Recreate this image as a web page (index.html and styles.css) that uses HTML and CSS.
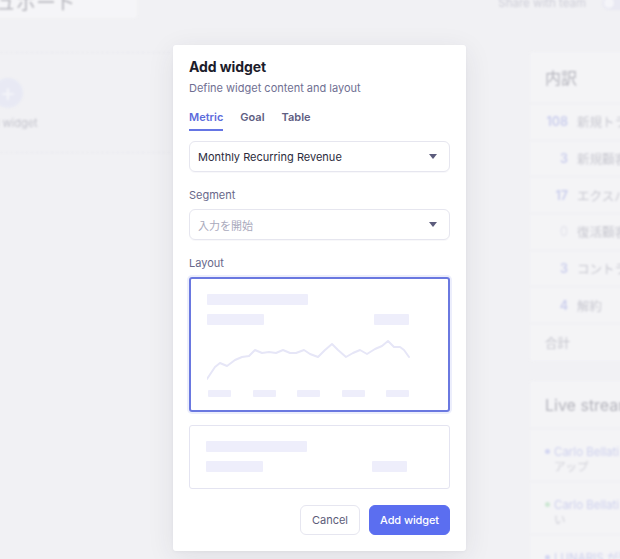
FILE: index.html
```html
<!DOCTYPE html>
<html lang="ja">
<head>
<meta charset="utf-8">
<title>Add widget</title>
<link rel="stylesheet" href="styles.css">
</head>
<body>
<div class="dash">
  <header class="dash-head">
    <div class="title-card">ダッシュボード</div>
    <div class="share">
      <span>Share with team</span>
      <span class="toggle"></span>
    </div>
  </header>
  <div class="dash-body">
    <section class="grid-left">
      <div class="add-slot">
        <span class="add-circle">+</span>
        <span class="add-label">Add widget</span>
      </div>
    </section>
    <aside class="side">
      <div class="panel">
        <div class="panel-head">内訳</div>
        <div class="brow"><span class="num">108</span><span class="lbl">新規トライアル</span></div>
        <div class="brow"><span class="num">3</span><span class="lbl">新規顧客</span></div>
        <div class="brow"><span class="num">17</span><span class="lbl">エクスパンション</span></div>
        <div class="brow"><span class="num zero">0</span><span class="lbl">復活顧客</span></div>
        <div class="brow"><span class="num">3</span><span class="lbl">コントラクション</span></div>
        <div class="brow"><span class="num">4</span><span class="lbl">解約</span></div>
        <div class="brow total"><span class="lbl">合計</span></div>
      </div>
      <div class="panel stream">
        <div class="panel-head">Live stream</div>
        <div class="srow"><span class="dot blue"></span><span class="who">Carlo Bellati がアップグレード</span><br><span class="cont">アップ</span></div>
        <div class="srow"><span class="dot green"></span><span class="who">Carlo Bellati が支払い</span><br><span class="cont">い</span></div>
        <div class="srow"><span class="dot blue"></span><span class="who">LUNARIS が登録</span></div>
      </div>
    </aside>
  </div>
</div>
<div class="scrim"></div>

<div class="modal">
  <h2 class="m-title">Add widget</h2>
  <p class="m-sub">Define widget content and layout</p>
  <nav class="tabs">
    <span class="tab active">Metric</span>
    <span class="tab">Goal</span>
    <span class="tab">Table</span>
  </nav>
  <div class="select">
    <span class="sel-text">Monthly Recurring Revenue</span>
    <span class="caret"></span>
  </div>
  <label class="field-label">Segment</label>
  <div class="select">
    <span class="sel-text placeholder">入力を開始</span>
    <span class="caret"></span>
  </div>
  <label class="field-label">Layout</label>
  <div class="layout-opt selected">
    <div class="sk sk-title"></div>
    <div class="sk-row">
      <div class="sk sk-val"></div>
      <div class="sk sk-delta"></div>
    </div>
    <svg class="sk-chart" width="203" height="44" viewBox="0 0 203 44">
      <polyline fill="none" stroke="#e6e6f7" stroke-width="2" stroke-linejoin="round" stroke-linecap="round"
        points="0,40 8,28 13,24 20,27 28,21 35,18 42,17 48,11 55,14 62,13 69,14 76,11 83,14 89,14 97,11 103,15 111,18 118,11 125,5 131,11 139,18 146,14 153,11 160,15 168,10 175,7 181,2 187,8 193,8 197,11 202,18"/>
    </svg>
    <div class="sk-axis">
      <span class="sk sk-tick"></span><span class="sk sk-tick"></span><span class="sk sk-tick"></span><span class="sk sk-tick"></span><span class="sk sk-tick"></span>
    </div>
  </div>
  <div class="layout-opt compact">
    <div class="sk sk-title"></div>
    <div class="sk-row">
      <div class="sk sk-val"></div>
      <div class="sk sk-delta"></div>
    </div>
  </div>
  <div class="actions">
    <button class="btn btn-ghost">Cancel</button>
    <button class="btn btn-primary">Add widget</button>
  </div>
</div>
</body>
</html>
```

FILE: styles.css
```css
* { box-sizing: border-box; }
html, body { margin: 0; padding: 0; }
body {
  width: 620px;
  height: 559px;
  overflow: hidden;
  position: relative;
  background: #f1f1f4;
  font-family: Inter, "Noto Sans CJK JP", sans-serif;
}

/* ---------- background dashboard (blurred) ---------- */
.dash {
  filter: blur(1px);
  color: #a9a9b4;
}
.dash-head {
  display: flex;
  justify-content: space-between;
  align-items: flex-start;
  height: 52px;
}
.title-card {
  margin-left: -74px;
  margin-top: -10px;
  width: 211px;
  height: 28px;
  background: #f7f7f9;
  border-radius: 4px;
  font-size: 20px;
  line-height: 26px;
  padding-left: 10px;
  color: #a0a0a9;
  white-space: nowrap;
  overflow: hidden;
}
.share {
  display: flex;
  align-items: center;
  gap: 16px;
  margin-top: -4px;
  margin-right: -8px;
  font-size: 11.5px;
  color: #bdbdc9;
}
.toggle {
  width: 26px;
  height: 14px;
  border-radius: 7px;
  background: #e5e5f2;
  position: relative;
}
.toggle::after {
  content: "";
  position: absolute;
  left: 2px; top: 2px;
  width: 10px; height: 10px;
  border-radius: 50%;
  background: #f7f7fb;
}
.dash-body {
  display: flex;
  justify-content: space-between;
}
.grid-left {
  width: 170px;
  height: 101px;
  border-top: 1px dashed #e2e2e9;
  border-bottom: 1px dashed #e2e2e9;
}
.add-slot {
  margin-left: -23px;
  width: 62px;
  padding-top: 25px;
  display: flex;
  flex-direction: column;
  align-items: center;
  gap: 8px;
}
.add-circle {
  width: 30px;
  height: 30px;
  border-radius: 50%;
  background: #e4e6f4;
  color: #f7f7fb;
  font-size: 24px;
  line-height: 29px;
  text-align: center;
}
.add-label {
  font-size: 11px;
  color: #b0b0bb;
  white-space: nowrap;
}
.side {
  width: 90px;
  display: flex;
  flex-direction: column;
  gap: 20px;
}
.panel {
  width: 200px;
  background: #f5f5f7;
  border-radius: 4px;
}
.panel-head {
  height: 52px;
  line-height: 52px;
  padding-left: 15px;
  font-size: 16px;
  color: #9a9aa4;
  border-bottom: 1px solid #ececf0;
}
.brow {
  height: 36.7px;
  display: flex;
  align-items: center;
  border-bottom: 1px solid #ededf1;
  font-size: 12.5px;
  white-space: nowrap;
}
.brow .num {
  width: 38px;
  text-align: right;
  color: #b8bde9;
  font-weight: 600;
}
.brow .num.zero { color: #dcdce6; font-weight: 400; }
.brow .lbl {
  margin-left: 9px;
  color: #b6b6c0;
}
.brow.total { border-bottom: none; }
.brow.total .lbl { margin-left: 15px; color: #b0b0ba; }
.stream .panel-head { height: 48px; line-height: 48px; }
.srow {
  height: 53px;
  padding: 16px 0 0 15px;
  font-size: 11.5px;
  line-height: 15px;
  border-bottom: 1px solid #ededf1;
  white-space: nowrap;
}
.srow .who { color: #bec2ea; }
.srow .cont { padding-left: 9px; color: #c2c2cb; }
.dot {
  display: inline-block;
  width: 5px; height: 5px;
  border-radius: 50%;
  margin-right: 4px;
  vertical-align: 2px;
}
.dot.blue { background: #c5c9f0; }
.dot.green { background: #bde2c5; }

.scrim {
  position: absolute;
  inset: 0;
  background: rgba(241, 241, 244, 0.3);
}

/* ---------- modal ---------- */
.modal {
  position: absolute;
  left: 173px;
  top: 45px;
  width: 293px;
  background: #ffffff;
  border-radius: 3px;
  padding: 12px 16px 16px;
  box-shadow: 0 6px 28px rgba(40, 40, 70, 0.09), 0 1px 3px rgba(40, 40, 70, 0.04);
  display: flex;
  flex-direction: column;
}
.m-title {
  margin: 0;
  font-size: 14px;
  line-height: 20px;
  font-weight: 700;
  color: #1c1c2b;
  letter-spacing: -0.1px;
}
.m-sub {
  margin: 3px 0 0;
  font-size: 11px;
  line-height: 16px;
  color: #6f6f92;
}
.tabs {
  display: flex;
  gap: 17px;
  margin-top: 12px;
}
.tab {
  font-size: 11px;
  line-height: 18px;
  font-weight: 600;
  color: #5e5e82;
  padding-bottom: 3px;
  border-bottom: 2px solid transparent;
}
.tab.active {
  color: #5c6bdc;
  border-bottom-color: #6575e4;
}
.select {
  margin-top: 10px;
  height: 31px;
  border: 1px solid #e6e6ef;
  border-radius: 6px;
  display: flex;
  align-items: center;
  justify-content: space-between;
  padding: 0 12px 0 8px;
  box-shadow: 0 1px 1px rgba(40, 40, 80, 0.03);
}
.sel-text {
  font-size: 11px;
  color: #2b2b3c;
}
.sel-text.placeholder {
  color: #a9a9bc;
}
.caret {
  width: 0; height: 0;
  border-left: 4px solid transparent;
  border-right: 4px solid transparent;
  border-top: 5px solid #5c5c7c;
}
.field-label {
  display: block;
  margin-top: 15px;
  font-size: 11px;
  line-height: 16px;
  color: #68688a;
}
.field-label + .select { margin-top: 6px; }
.layout-opt {
  margin-top: 6px;
  border: 1px solid #e4e4f1;
  border-radius: 3px;
  display: flex;
  flex-direction: column;
}
.layout-opt.selected {
  height: 135px;
  border: 2px solid #6a78e0;
  box-shadow: 0 0 0 2px #eceefc;
  padding: 15px 39px 0 16px;
}
.layout-opt.compact {
  margin-top: 13px;
  height: 64px;
  padding: 15px 42px 0 16px;
}
.sk {
  background: #eeeefb;
  border-radius: 1px;
}
.sk-title { width: 101px; height: 11px; }
.sk-row {
  display: flex;
  justify-content: space-between;
  margin-top: 9px;
}
.sk-val { width: 57px; height: 11px; }
.sk-delta { width: 35px; height: 11px; }
.sk-chart {
  display: block;
  margin-top: 14px;
}
.sk-axis {
  display: flex;
  justify-content: space-between;
  margin-top: 7px;
  padding-left: 1px;
}
.sk-tick { width: 23px; height: 7px; }
.actions {
  display: flex;
  justify-content: flex-end;
  gap: 9px;
  margin-top: 16px;
}
.btn {
  height: 30px;
  border-radius: 6px;
  font-family: inherit;
  font-size: 11px;
  padding: 0 11px;
  cursor: pointer;
}
.btn-ghost {
  background: #ffffff;
  border: 1px solid #e6e6f0;
  color: #5c5c78;
}
.btn-primary {
  background: #5b6ef0;
  border: 1px solid #5b6ef0;
  color: #ffffff;
  font-weight: 500;
  padding: 0 10px;
  letter-spacing: -0.1px;
}
```
